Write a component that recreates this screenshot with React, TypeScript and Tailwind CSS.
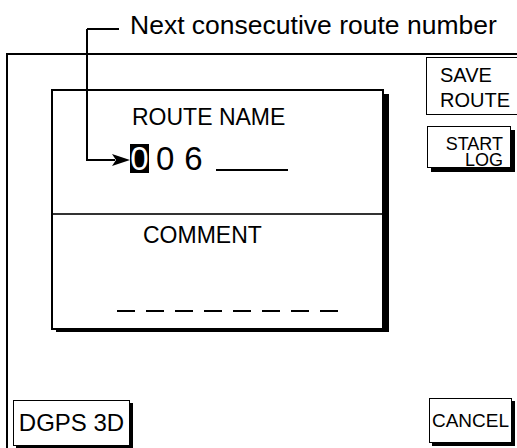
import React from "react";

function Shadowed({
  className,
  box,
  shadow,
  children,
}: {
  className: string;
  box: string;
  shadow: string;
  children: React.ReactNode;
}) {
  return (
    <div className={"grid " + className}>
      <div className={"col-start-1 row-start-1 bg-black " + shadow} />
      <div className={"col-start-1 row-start-1 bg-white " + box}>{children}</div>
    </div>
  );
}

export default function App() {
  return (
    <div className="relative w-[517px] h-[448px] overflow-hidden bg-white text-black font-['Liberation_Sans',Arial,sans-serif]">
      {/* Header caption */}
      <div className="h-[53px] pt-[10px] pl-[130px] text-[26.5px] leading-[30px] whitespace-nowrap">
        Next consecutive route number
      </div>

      {/* Screen frame */}
      <div className="ml-[6px] h-[395px] w-[520px] border-l-2 border-t-2 border-black flex">
        {/* Left column */}
        <div className="w-[419px] flex flex-col">
          {/* Dialog */}
          <Shadowed
            className="mt-[34px] ml-[43px] w-[338px] h-[246px]"
            shadow="mt-[5px] ml-[5px]"
            box="w-[333px] h-[241px] border-2 border-black flex flex-col"
          >
            <div className="h-[122px] flex flex-col">
              <div className="mt-[13px] pl-[79px] text-[23px] leading-[26px] whitespace-nowrap">ROUTE NAME</div>
              <div className="mt-[14px] pl-[77px] flex items-end">
                <span className="bg-black text-white text-[33px] leading-[29px] h-[29px] w-[19px] flex justify-center">0</span>
                <span className="ml-[7px] text-[33px] leading-[29px] h-[29px]">0</span>
                <span className="ml-[10px] text-[33px] leading-[29px] h-[29px]">6</span>
                <div className="ml-[13px] mb-[2px] w-[72px] h-[2px] bg-black" />
              </div>
            </div>
            <div className="h-[2px] bg-[#333333]" />
            <div className="mt-[7px] pl-[90px] text-[23px] leading-[26px] whitespace-nowrap">COMMENT</div>
            <div className="mt-[62px] pl-[64px] flex gap-[11px]">
              {[0, 1, 2, 3, 4, 5, 6, 7].map((i) => (
                <div key={i} className="w-[18px] h-[2px] bg-black" />
              ))}
            </div>
          </Shadowed>

          {/* DGPS 3D */}
          <Shadowed
            className="mt-[68px] ml-[5px] w-[120px] h-[49px]"
            shadow="mt-[3px] ml-[3px]"
            box="w-[117px] h-[46px] border border-black flex items-center justify-center text-[24px] leading-[28px] whitespace-nowrap"
          >
            DGPS 3D
          </Shadowed>
        </div>

        {/* Right column */}
        <div className="flex flex-col">
          <div className="mt-[2px] w-[100px] h-[58px] border border-black bg-white pl-[13px] pt-[5px] text-[20px] leading-[25px]">
            <div>SAVE</div>
            <div>ROUTE</div>
          </div>
          <Shadowed
            className="mt-[11px] ml-[1px] w-[88px] h-[46px]"
            shadow="mt-[4px] ml-[4px]"
            box="w-[84px] h-[42px] border border-black pt-[9px] pr-[7px] text-right text-[18px] leading-[16px]"
          >
            <div>START</div>
            <div>LOG</div>
          </Shadowed>
          <Shadowed
            className="mt-[226px] ml-[3px] w-[86px] h-[48px]"
            shadow="mt-[3px] ml-[3px]"
            box="w-[83px] h-[45px] border border-black flex items-center justify-center text-[19px] leading-[22px]"
          >
            CANCEL
          </Shadowed>
        </div>
      </div>

      {/* Leader line with arrow (overlay) */}
      <svg className="absolute left-0 top-0 pointer-events-none" width="517" height="448" viewBox="0 0 517 448">
        <path d="M87 29 H119 M87 29 V160 H115" fill="none" stroke="#000" strokeWidth="2" />
        <polygon points="112,154 130,160 112,166 116,160" fill="#000" />
      </svg>
    </div>
  );
}
